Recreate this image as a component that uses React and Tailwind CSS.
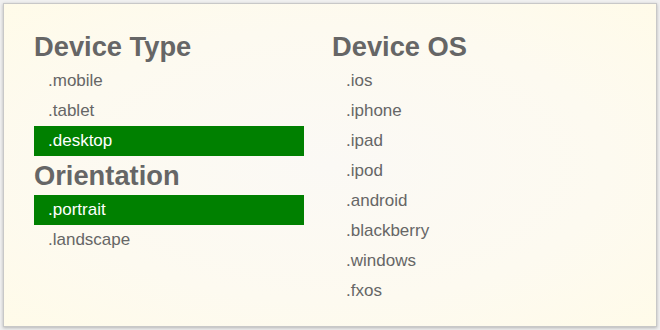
const columns = [
  {
    groups: [
      { title: 'Device Type', items: ['.mobile', '.tablet', '.desktop'], active: '.desktop' },
      { title: 'Orientation', items: ['.portrait', '.landscape'], active: '.portrait' },
    ],
  },
  {
    groups: [
      {
        title: 'Device OS',
        items: ['.ios', '.iphone', '.ipad', '.ipod', '.android', '.blackberry', '.windows', '.fxos'],
        active: null,
      },
    ],
  },
]

function App() {
  return (
    <main className="h-[330px] w-[660px] bg-[#f0f0f0] p-[3px] font-['Liberation_Sans',Arial,sans-serif]">
      <div className="flex h-full gap-[28px] border border-[#c8c8c8] bg-[radial-gradient(ellipse_at_center,#fbf9f5_0%,#fdfaf0_60%,#fffbe9_100%)] pl-[30px] pt-[23px] shadow-[0_1px_3px_rgba(0,0,0,0.25)]">
        {columns.map((col, i) => (
          <div key={i} className="w-[270px]">
            {col.groups.map((group) => (
              <section key={group.title}>
                <h2 className="text-[27.3px] font-bold leading-[39px] text-[#666]">{group.title}</h2>
                <ul>
                  {group.items.map((item) => (
                    <li
                      key={item}
                      className={
                        item === group.active
                          ? 'bg-[#008000] pl-[14px] text-[17px] leading-[30px] text-white'
                          : 'pl-[14px] text-[17px] leading-[30px] text-[#666]'
                      }
                    >
                      {item}
                    </li>
                  ))}
                </ul>
              </section>
            ))}
          </div>
        ))}
      </div>
    </main>
  )
}

export default App
